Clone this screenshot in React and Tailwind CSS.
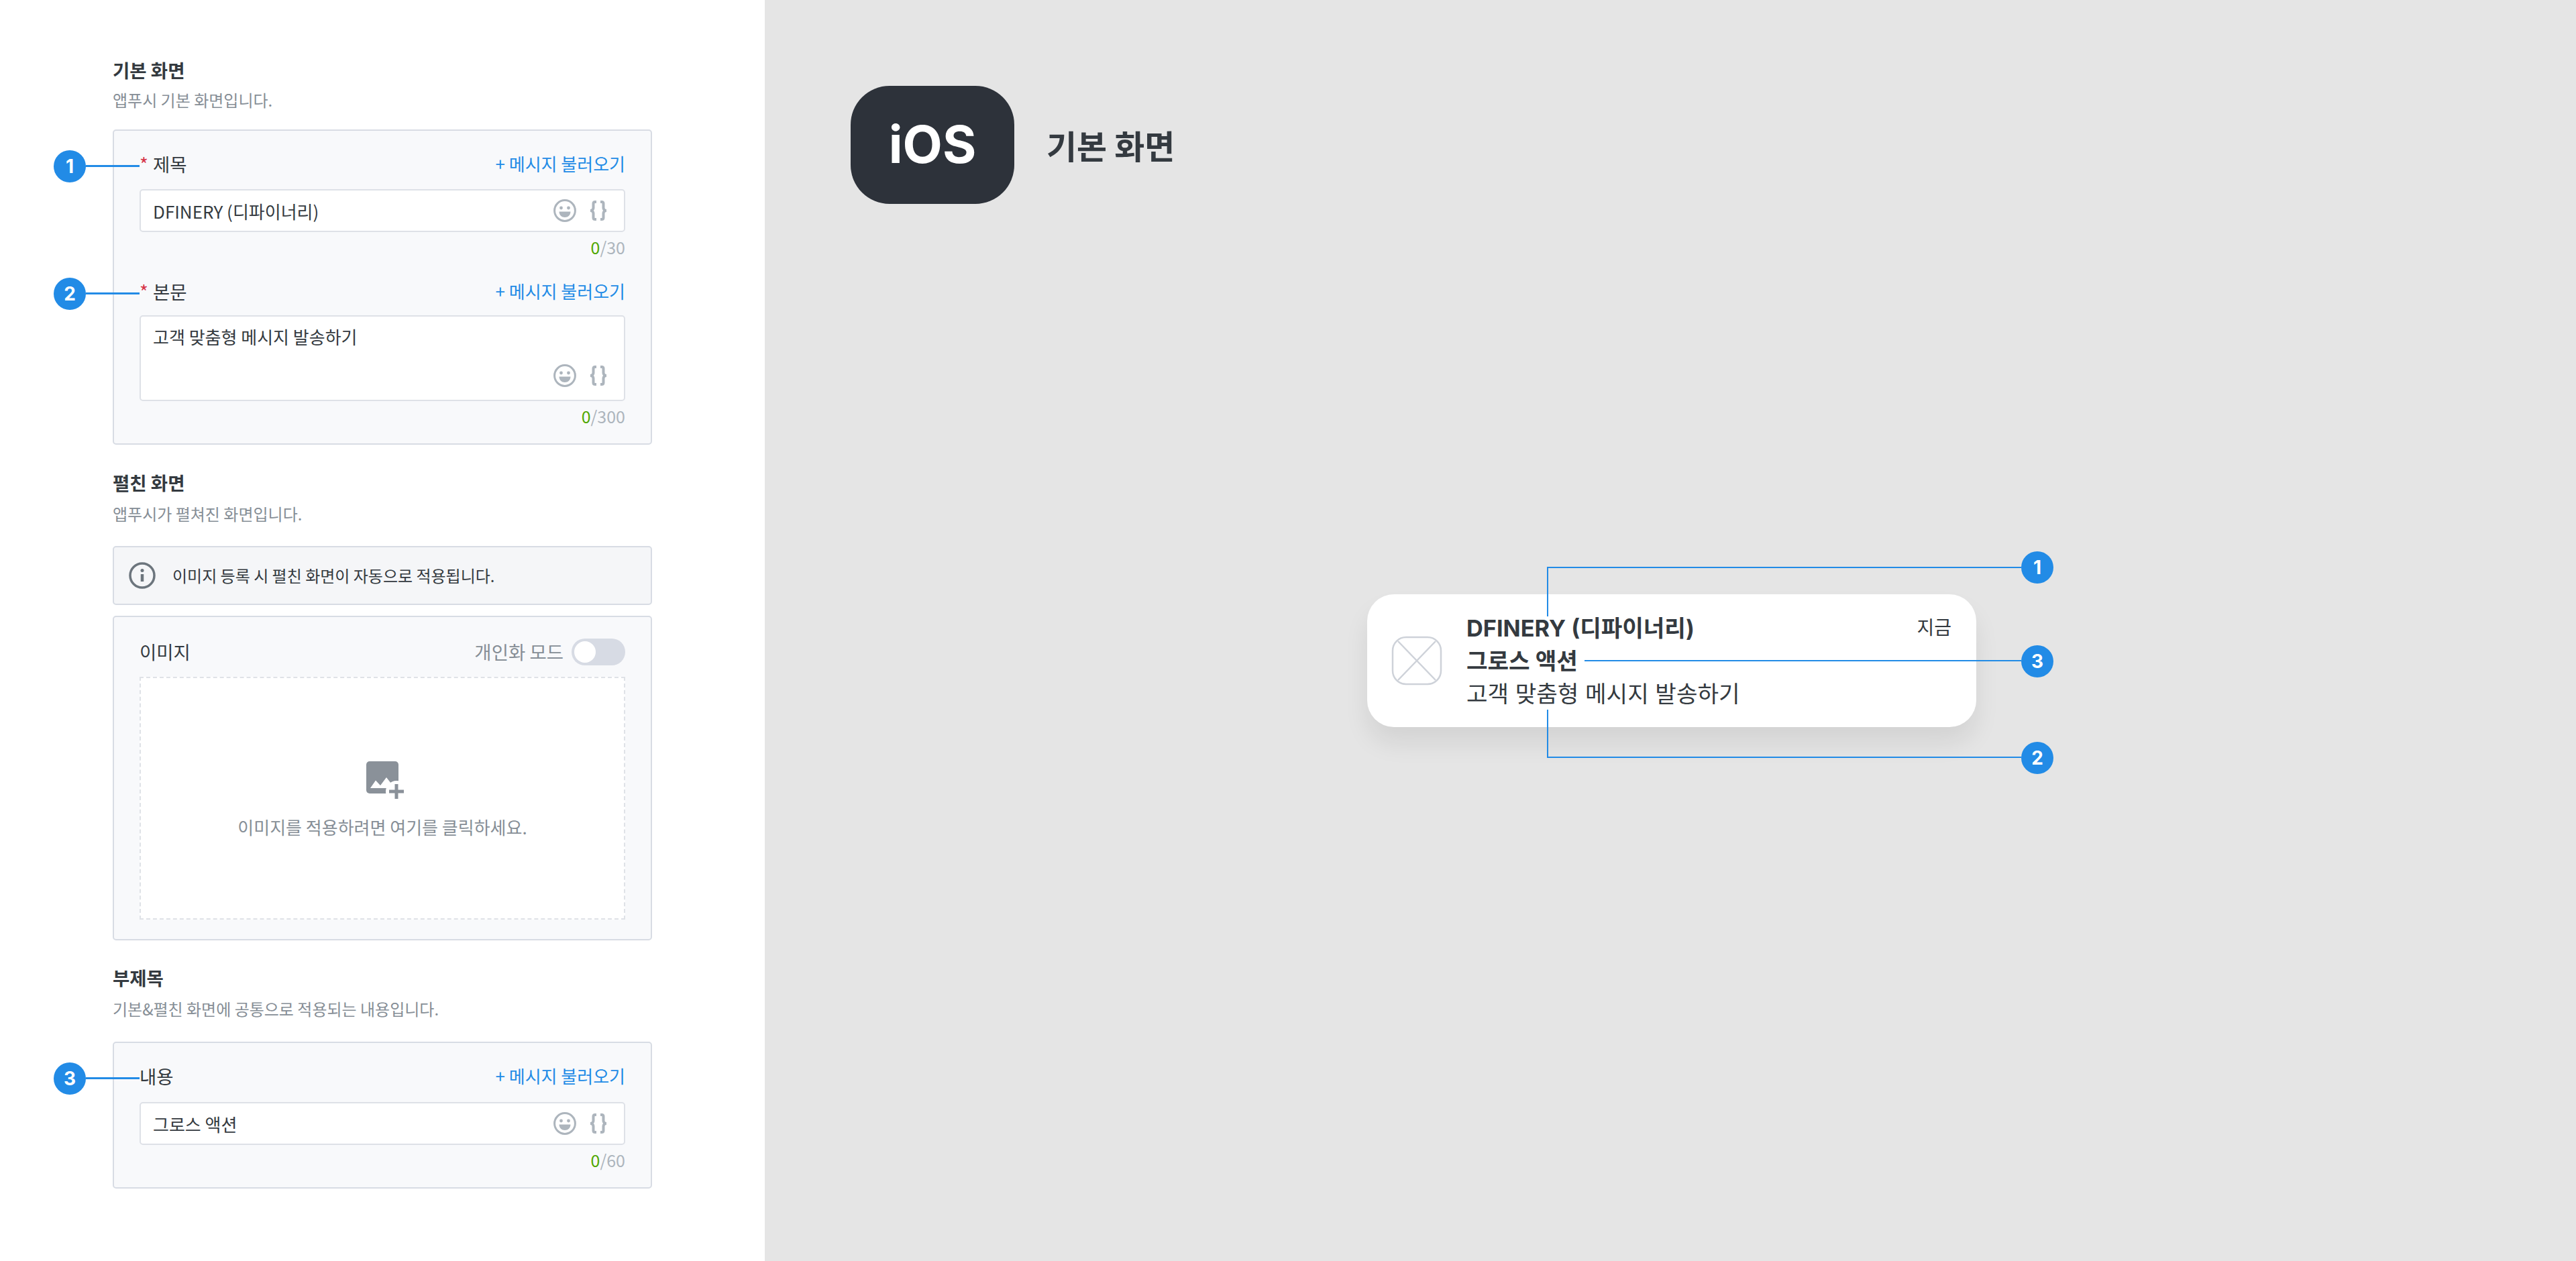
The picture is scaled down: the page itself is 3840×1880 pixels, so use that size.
const KR = 'font-["Noto_Sans_CJK_KR",sans-serif]';
const UI = 'font-["Inter","Noto_Sans_CJK_KR",sans-serif]';

function Badge({ n, className = '' }) {
  return (
    <span className={`absolute flex h-[48px] w-[48px] items-center justify-center rounded-full bg-[#228be6] text-[28px] font-bold leading-none text-white ${UI} ${className}`}>
      {n}
    </span>
  );
}

function SmileIcon() {
  return (
    <svg width="34" height="34" viewBox="0 0 34 34" fill="none">
      <circle cx="17" cy="17" r="15.4" stroke="#adb5bd" strokeWidth="3" />
      <circle cx="11.5" cy="13" r="2.4" fill="#adb5bd" />
      <circle cx="22.5" cy="13" r="2.4" fill="#adb5bd" />
      <path d="M8.5 18.5h17c0 5-3.8 8.500-8.500 8.500s-8.500-3.500-8.500-8.500z" fill="#adb5bd" />
    </svg>
  );
}

function BraceIcon() {
  return (
    <svg width="28" height="30" viewBox="0 0 28 30" fill="none" stroke="#adb5bd" strokeWidth="4">
      <path d="M11 2H9C7.500 2 6.500 3 6.500 4.500V11c0 2-1.500 4-4.500 4 3 0 4.500 2 4.500 4v6.500C6.500 27 7.500 28 9 28h2" />
      <path d="M17 2h2c1.500 0 2.500 1 2.500 2.500V11c0 2 1.500 4 4.500 4-3 0-4.500 2-4.500 4v6.500c0 1.500-1 2.500-2.500 2.500h-2" />
    </svg>
  );
}

function InputIcons() {
  return (
    <div className="flex items-center gap-[19px]">
      <SmileIcon />
      <BraceIcon />
    </div>
  );
}

function ImageAddIcon() {
  return (
    <svg width="60" height="60" viewBox="0 0 60 60" className="ml-[12px]">
      <rect x="0" y="0" width="48" height="48" rx="5" fill="#8a9199" />
      <path d="M6 40l8-11.500 7 7.500 9-12 7 9v7H6z" fill="#fff" />
      <circle cx="45" cy="45" r="16" fill="#fff" />
      <path d="M45 34v22M34 45h22" stroke="#8a9199" strokeWidth="5" />
    </svg>
  );
}

function SectionHead({ title, sub, className = '', gap = 'mt-[13px]' }) {
  return (
    <div className={className}>
      <h2 className="text-[27.500px] font-bold leading-[36px] text-[#343a40]">{title}</h2>
      <p className={`${gap} text-[24px] leading-[32px] text-[#868e96]`}>{sub}</p>
    </div>
  );
}

function FieldHead({ label, required, n }) {
  return (
    <div className="relative flex h-[40px] items-center justify-between">
      <Badge n={n} className="left-[-128px] top-[-1px]" />
      <span className="absolute left-[-80px] top-[21px] h-[3px] w-[80px] bg-[#228be6]" />
      <div className="flex items-center text-[27.500px] text-[#343a40]">
        {required && <span className="mr-[8px] w-[12px] text-[#d6344a]">*</span>}
        {label}
      </div>
      <span className="mb-[4px] text-[26px] text-[#228be6]">+ 메시지 불러오기</span>
    </div>
  );
}

function Counter({ max }) {
  return (
    <div className="mt-[7px] text-right text-[25px] leading-[30px] text-[#adb5bd]">
      <span className="text-[#51a800]">0</span>/{max}
    </div>
  );
}

function SingleInput({ value, className = 'mt-[17px]' }) {
  return (
    <div className={`${className} flex h-[64px] items-center justify-between rounded-[5px] border-2 border-[#dee1e7] bg-white pl-[18px] pr-[24px] text-[26px] text-[#343a40]`}>
      <span>{value}</span>
      <InputIcons />
    </div>
  );
}

export default function App() {
  return (
    <div className={`flex h-[1880px] w-[3840px] overflow-hidden ${KR}`}>
      <div className="h-full w-[1140px] bg-white pl-[168px] pr-[168px] pt-[86px]">
        <SectionHead title="기본 화면" sub="앱푸시 기본 화면입니다." gap="mt-[11px]" />
        <div className="mt-[28px] h-[470px] rounded-[5px] border-2 border-[#d8dce4] bg-[#f8f9fb] px-[38px] pt-[30px]">
          <FieldHead label="제목" required n={1} />
          <SingleInput value="DFINERY (디파이너리)" />
          <Counter max={30} />
          <div className="mt-[32px]">
            <FieldHead label="본문" required n={2} />
          </div>
          <div className="mt-[15px] flex h-[128px] flex-col justify-between rounded-[5px] border-2 border-[#dee1e7] bg-white pb-[19px] pl-[18px] pr-[24px] pt-[12px] text-[26px] leading-[36px] text-[#343a40]">
            <span>고객 맞춤형 메시지 발송하기</span>
            <div className="flex justify-end">
              <InputIcons />
            </div>
          </div>
          <Counter max={300} />
        </div>

        <SectionHead title="펼친 화면" sub="앱푸시가 펼쳐진 화면입니다." className="mt-[38px]" />
        <div className="mt-[32px] flex h-[88px] items-center rounded-[5px] border-2 border-[#d8dce4] bg-[#f5f6f8] pl-[22px] text-[24px] text-[#343a40]">
          <svg width="40" height="40" viewBox="0 0 40 40" fill="none">
            <circle cx="20" cy="20" r="18" stroke="#6c757d" strokeWidth="3.500" />
            <circle cx="20" cy="12.500" r="2.500" fill="#6c757d" />
            <path d="M20 18v11" stroke="#6c757d" strokeWidth="4.500" />
          </svg>
          <span className="ml-[25px]">이미지 등록 시 펼친 화면이 자동으로 적용됩니다.</span>
        </div>
        <div className="mt-[16px] h-[484px] rounded-[5px] border-2 border-[#d8dce4] bg-[#f8f9fb] px-[38px] pt-[32px]">
          <div className="flex h-[40px] items-center justify-between">
            <span className="text-[27.500px] text-[#343a40]">이미지</span>
            <div className="flex items-center gap-[12px]">
              <span className="text-[27.500px] text-[#868e96]">개인화 모드</span>
              <div className="flex h-[40px] w-[80px] items-center rounded-full bg-[#d7dbe4] pl-[4px]">
                <span className="h-[32px] w-[32px] rounded-full bg-white" />
              </div>
            </div>
          </div>
          <div className="mt-[17px] flex h-[362px] flex-col items-center border-2 border-dashed border-[#dfe2e7] bg-white pt-[124px]">
            <ImageAddIcon />
            <span className="mt-[20px] text-[26px] leading-[36px] text-[#868e96]">이미지를 적용하려면 여기를 클릭하세요.</span>
          </div>
        </div>

        <SectionHead title="부제목" sub="기본&펼친 화면에 공통으로 적용되는 내용입니다." className="mt-[37px]" />
        <div className="mt-[33px] h-[219px] rounded-[5px] border-2 border-[#d8dce4] bg-[#f8f9fb] px-[38px] pt-[30px]">
          <FieldHead label="내용" n={3} />
          <SingleInput value="그로스 액션" className="mt-[18px]" />
          <Counter max={60} />
        </div>
      </div>

      <div className="h-full flex-1 bg-[#e5e5e5] pl-[128px] pt-[128px]">
        <div className="flex items-center gap-[48px]">
          <div className={`flex h-[176px] w-[244px] items-center justify-center rounded-[58px] bg-[#2d323a] text-[77px] font-bold text-white ${UI}`}>
            iOS
          </div>
          <span className="text-[49px] font-bold text-[#343a40]">기본 화면</span>
        </div>

        <div className="relative ml-[770px] mt-[582px] flex h-[198px] w-[908px] items-center rounded-[40px] bg-white pl-[36px] pr-[37px] shadow-[0_24px_36px_rgba(0,0,0,0.08)]">
          <svg width="76" height="74" viewBox="0 0 76 74" fill="none" stroke="#ced2d9" strokeWidth="2.500">
            <rect x="2" y="2" width="72" height="70" rx="20" />
            <path d="M10 8l56 58M66 8L10 66" />
          </svg>
          <div className={`ml-[36px] flex-1 self-center leading-[49px] text-[#343a40] ${UI}`}>
            <div className="flex items-center justify-between">
              <span className="text-[34.300px] font-bold">DFINERY (디파이너리)</span>
              <span className="text-[28px]">지금</span>
            </div>
            <div className="text-[34.300px] font-bold">그로스 액션</div>
            <div className="text-[34.300px]">고객 맞춤형 메시지 발송하기</div>
          </div>

          <span className="absolute left-[268px] top-[-41px] h-[74px] w-[2px] bg-[#228be6]" />
          <span className="absolute left-[268px] top-[-41px] h-[2px] w-[707px] bg-[#228be6]" />
          <Badge n={1} className="left-[975px] top-[-64px]" />

          <span className="absolute left-[324px] top-[98px] h-[2px] w-[651px] bg-[#228be6]" />
          <Badge n={3} className="left-[975px] top-[76px]" />

          <span className="absolute left-[268px] top-[172px] h-[71px] w-[2px] bg-[#228be6]" />
          <span className="absolute left-[268px] top-[242px] h-[2px] w-[707px] bg-[#228be6]" />
          <Badge n={2} className="left-[975px] top-[220px]" />
        </div>
      </div>
    </div>
  );
}
